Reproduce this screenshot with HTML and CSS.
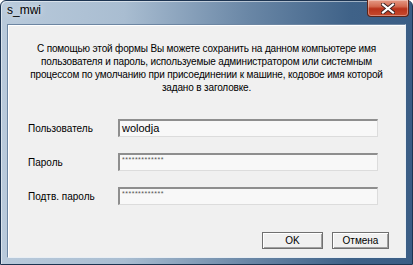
FILE: index.html
```html
<!DOCTYPE html>
<html lang="ru">
<head>
<meta charset="utf-8">
<title>s_mwi</title>
<link rel="stylesheet" href="styles.css">
</head>
<body>
<div class="window">
  <div class="titlebar">
    <span class="title">s_mwi</span>
    <div class="close">
      <svg width="14" height="11" viewBox="0 0 14 11">
        <path d="M2 1.5 L12 9.5 M12 1.5 L2 9.5" stroke="#3a2020" stroke-width="4" stroke-linecap="square"/>
        <path d="M2 1.5 L12 9.5 M12 1.5 L2 9.5" stroke="#ffffff" stroke-width="2.2" stroke-linecap="square"/>
      </svg>
    </div>
  </div>
  <div class="client">
    <p class="intro">С помощью этой формы Вы можете сохранить на данном компьютере имя пользователя и пароль, используемые администратором или системным процессом по умолчанию при присоединении к машине, кодовое имя которой задано в заголовке.</p>
    <div class="form">
      <label class="label">Пользователь</label>
      <div class="field">wolodja</div>
      <label class="label">Пароль</label>
      <div class="field pass">*************</div>
      <label class="label">Подтв. пароль</label>
      <div class="field pass">*************</div>
    </div>
    <div class="buttons">
      <div class="btn btn-ok">OK</div>
      <div class="btn btn-cancel">Отмена</div>
    </div>
  </div>
</div>
</body>
</html>
```

FILE: styles.css
```css
html, body {
  margin: 0;
  padding: 0;
}
body {
  width: 413px;
  height: 265px;
  overflow: hidden;
  font-family: "Liberation Sans", Arial, sans-serif;
  font-size: 11px;
  color: #000;
}
.window {
  width: 413px;
  height: 265px;
  box-sizing: border-box;
  display: flex;
  flex-direction: column;
  background: linear-gradient(90deg, #b9cadb 0%, #a9bdd1 30%, #6a87a6 60%, #3f6288 85%, #3a5d85 100%);
  border: 1px solid #1d3451;
  border-radius: 6px 6px 0 0;
  box-shadow: inset 1px 1px 0 rgba(255,255,255,0.5);
}
.titlebar {
  height: 23px;
  display: flex;
  justify-content: space-between;
  align-items: flex-start;
  padding-left: 6px;
  flex: none;
}
.title {
  font-family: "Liberation Sans", Arial, sans-serif;
  font-size: 12px;
  color: #000;
  margin-top: 2px;
  text-shadow: 0 0 6px rgba(255,255,255,0.9);
}
.close {
  width: 42px;
  height: 17px;
  margin-right: 3px;
  margin-top: -1px;
  box-sizing: border-box;
  border: 1px solid #5b2418;
  border-top: none;
  border-radius: 0 0 4px 4px;
  background: linear-gradient(180deg, #e59a86 0%, #d36a50 40%, #b8321a 55%, #c64a2e 100%);
  display: flex;
  align-items: center;
  justify-content: center;
  box-shadow: inset 0 0 0 1px rgba(255,255,255,0.35);
}
.client {
  flex: 1;
  margin: 0 6px 6px 6px;
  background: #f0f0f0;
  border: 1px solid #6d86a2;
  box-shadow: inset 1px 1px 0 #ffffff;
  display: flex;
  flex-direction: column;
  border-bottom-color: #e8eef4;
  border-right-color: #e8eef4;
}
.intro {
  margin: 17px 8px 0 8px;
  text-align: center;
  font-size: 10px;
  letter-spacing: -0.15px;
  line-height: 13px;
}
.form {
  display: grid;
  grid-template-columns: 90px 260px;
  column-gap: 0;
  row-gap: 16px;
  align-items: center;
  margin: 25px 0 0 20px;
}
.label {
  font-size: 10px;
  margin-top: 1px;
}
.field {
  height: 18px;
  box-sizing: border-box;
  background: #f8f8f8;
  border-top: 2px solid #8e8e8e;
  border-left: 2px solid #8e8e8e;
  border-right: 1px solid #dcdcdc;
  border-bottom: 1px solid #dcdcdc;
  padding: 0 0 0 2px;
  font-size: 11px;
  line-height: 15px;
}
.field.pass {
  font-size: 7px;
  line-height: 9px;
  color: #555;
  letter-spacing: 0.5px;
}
.buttons {
  display: flex;
  justify-content: flex-end;
  gap: 9px;
  margin: auto 16px 8px 0;
}
.btn {
  height: 17px;
  box-sizing: border-box;
  border: 1px solid #707070;
  background: #f0f0f0;
  box-shadow: inset 1px 1px 0 #ffffff, inset -1px -1px 0 #a0a0a0;
  font-size: 10px;
  line-height: 15px;
  text-align: center;
}
.btn-ok {
  width: 61px;
}
.btn-cancel {
  width: 57px;
}
```
